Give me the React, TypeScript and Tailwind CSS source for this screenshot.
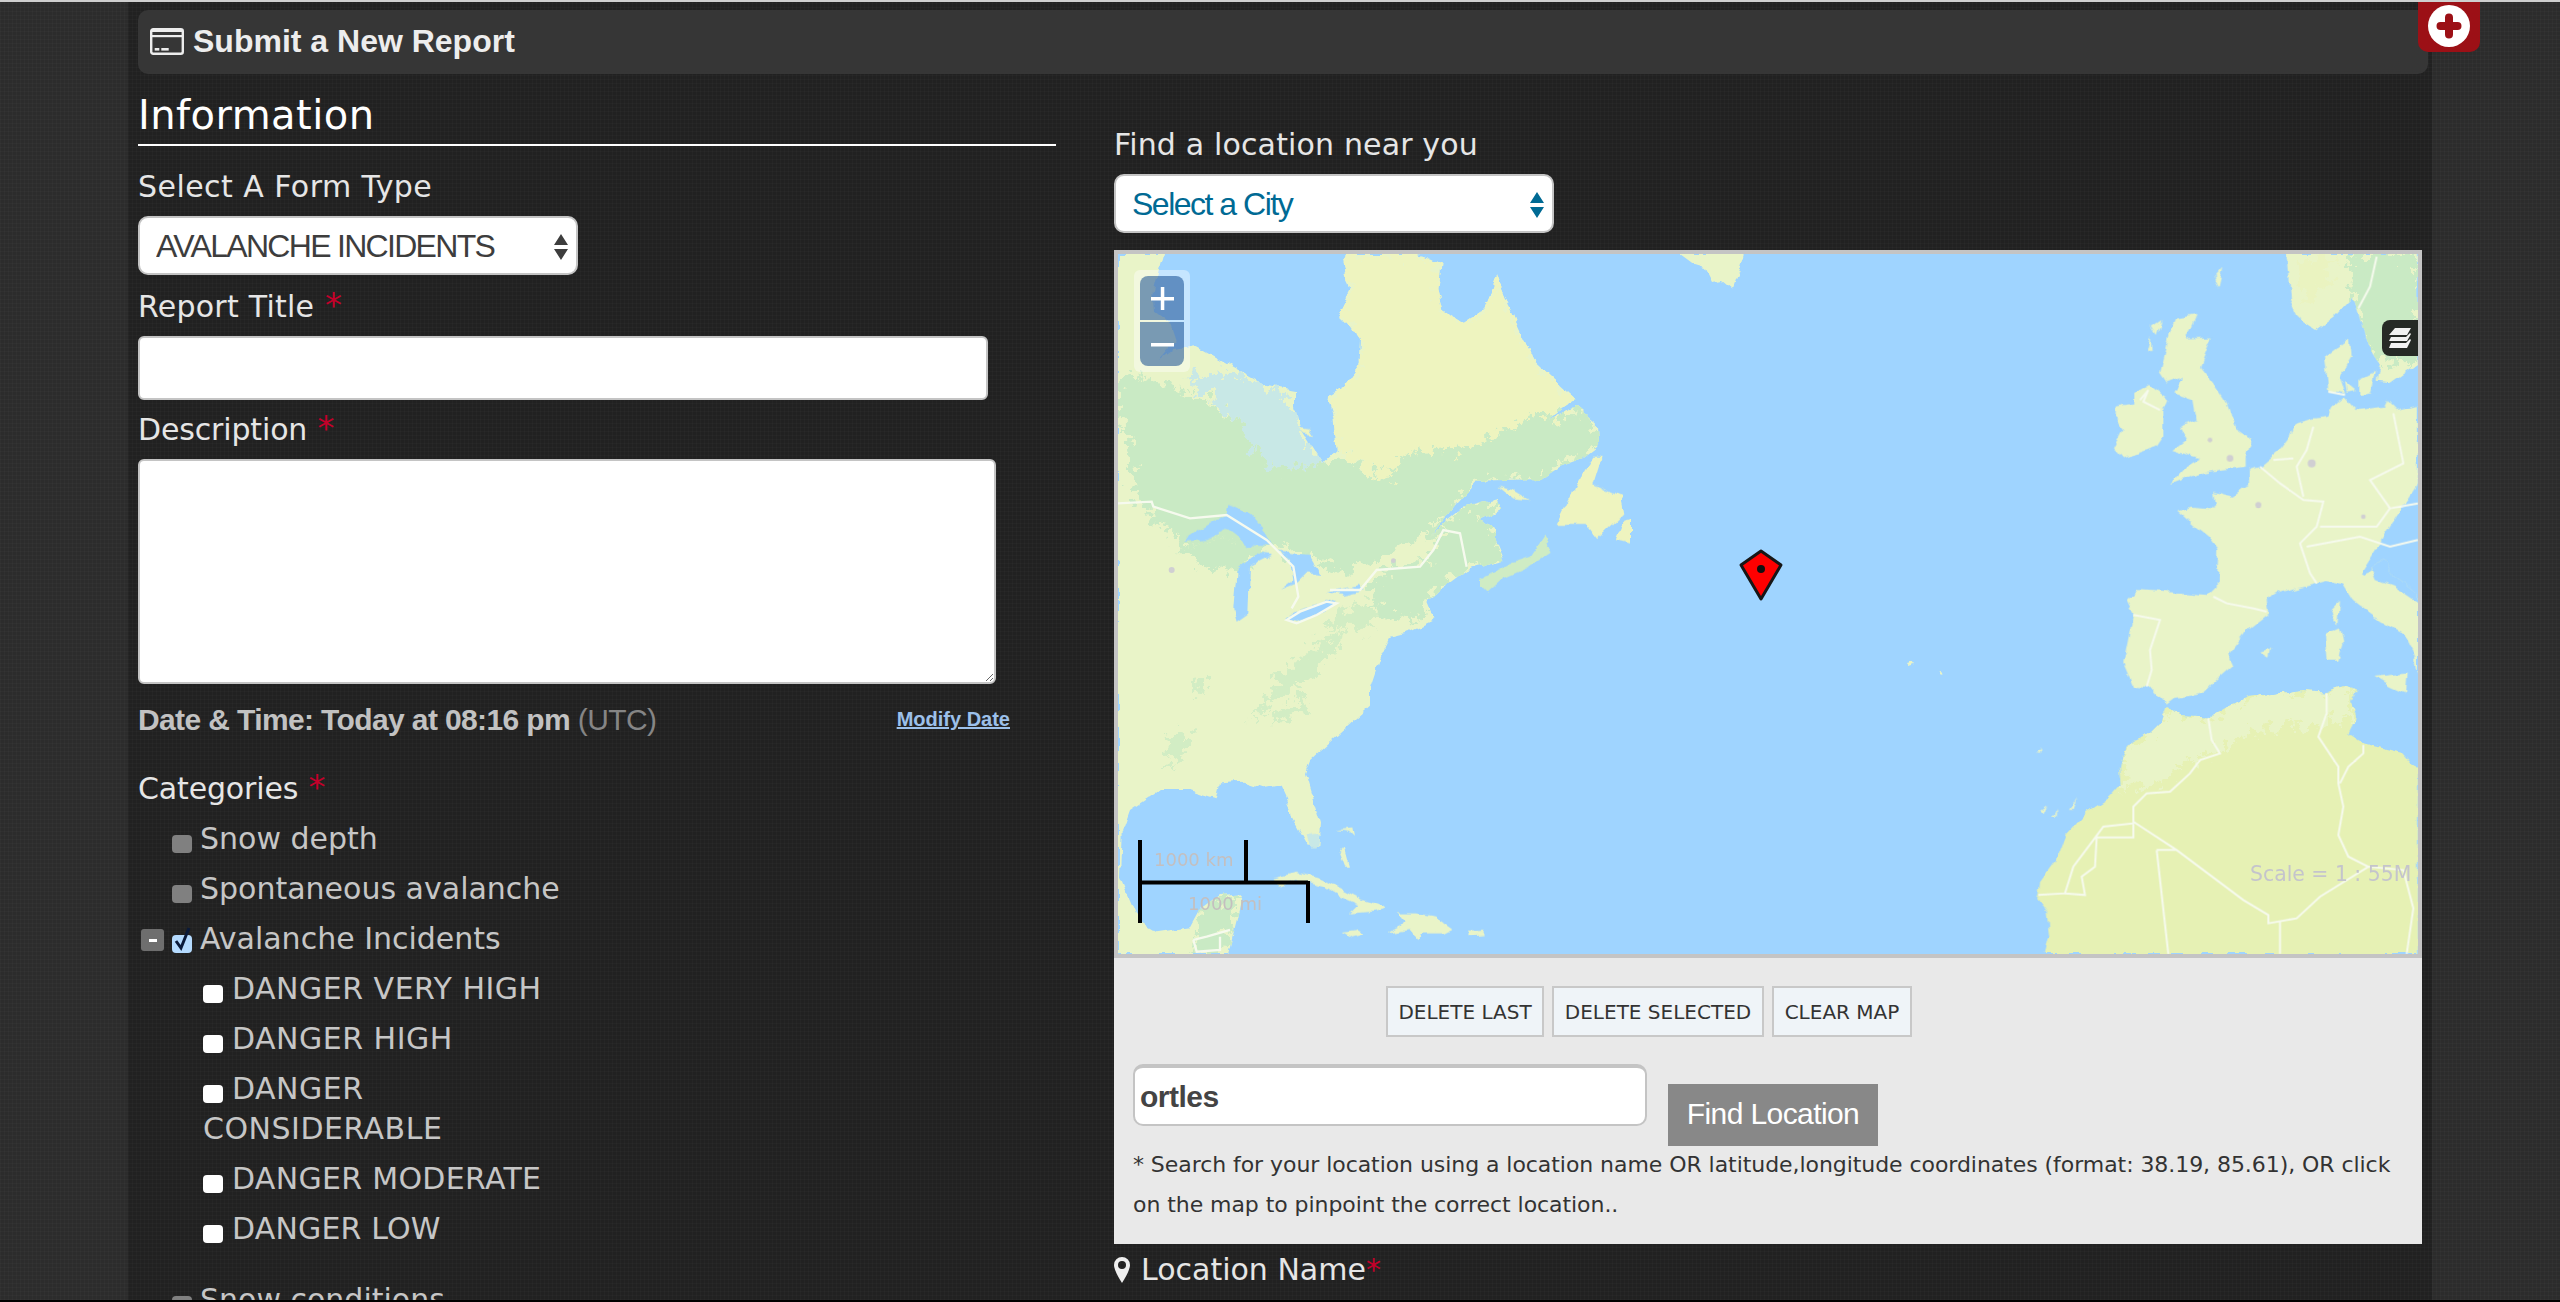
const LABEL = "font-['DejaVu_Sans',sans-serif] text-[30px] leading-[40px] text-[#e6e6e6]";
const TREE = "font-['DejaVu_Sans',sans-serif] text-[30px] leading-[40px] text-[#c6c6c6] pb-[10px]";
const GRID =
  'bg-[repeating-linear-gradient(90deg,rgba(255,255,255,0.018)_0_1px,transparent_1px_4px),repeating-linear-gradient(0deg,rgba(255,255,255,0.018)_0_1px,transparent_1px_4px)]';
const SELECT = "w-full h-full appearance-none rounded-[10px] border-2 border-[#c4c4c4] bg-white pl-[16px] font-['Liberation_Sans',sans-serif] text-[32px]";

const Star = () => <span className="text-[#c4002a] text-[34px] leading-[30px] ml-[1px]">*</span>;

const Arrows = ({ color }: { color: string }) => (
  <svg className="absolute right-[9px] top-[18px]" width="16" height="26" viewBox="0 0 16 26" fill={color}>
    <path d="M8 0l7 11H1zM1 15h14l-7 11z" />
  </svg>
);

const GrayBox = () => <span className="inline-block w-[20px] h-[18px] rounded-[4px] bg-[#808080] mr-[8px] align-[-4px]" />;
const WhiteBox = () => <span className="inline-block w-[20px] h-[18px] rounded-[4px] bg-white mr-[9px] align-[-4px]" />;

// traced from the map, in 3x coordinates
const NA =
  'M24 12L160 12 130 125 135 185 185 225 200 270 150 330 190 300 260 288 370 350 470 405 555 420 555 470 570 530 620 610 640 640 680 600 670 500 650 440 700 410 745 350 750 270 720 225 685 190 720 120 700 40 715 12 920 12 995 40 985 120 1000 180 1060 220 1120 180 1160 75 1215 210 1270 330 1400 450 1310 510 1400 470 1460 520 1465 590 1420 625 1350 650 1290 690 1100 695 1040 760 960 860 1000 820 1060 770 1160 745 1170 780 1110 810 1155 830 1155 870 1180 930 1070 960 950 1050 975 1110 900 1145 840 1160 810 1220 780 1310 780 1370 700 1440 600 1530 585 1570 630 1720 625 1790 595 1790 545 1700 540 1670 510 1605 460 1615 400 1595 330 1600 320 1645 240 1620 150 1620 60 1680 35 1750 30 1880 90 2020 140 2050 240 2035 270 1980 330 1935 400 1930 355 2112 24 2112Z';
const SCAND = 'M980 12L990 150 1020 210 1065 240 1120 200 1175 140 1190 170 1220 280 1260 340 1250 395 1290 400 1374 340 1374 12Z';
const AFRICA =
  'M620 1370L660 1395 750 1400 800 1370 870 1340 1030 1320 1100 1325 1150 1308 1190 1322 1170 1360 1190 1400 1165 1450 1210 1480 1330 1510 1374 1560 1374 2112 255 2112 268 2060 260 1990 232 1950 240 1900 290 1830 320 1750 380 1685 450 1640 485 1600 480 1560 490 1510 520 1470 570 1450 600 1420Z';
const NA_T = 'translate(1110 250) scale(0.33333)';
const EU_T = 'translate(1960 250) scale(0.33333)';

function WorldMap() {
  return (
    <svg className="block w-[1300px] h-[700px]" viewBox="1118 254 1300 700">
      <defs>
        <filter id="rough" filterUnits="userSpaceOnUse" x="1100" y="240" width="1340" height="730">
          <feTurbulence type="fractalNoise" baseFrequency="0.07" numOctaves="3" seed="4" result="n" />
          <feDisplacementMap in="SourceGraphic" in2="n" scale="8" xChannelSelector="R" yChannelSelector="G" />
          <feGaussianBlur stdDeviation="0.6" />
        </filter>
        <filter id="speckle" filterUnits="userSpaceOnUse" x="1100" y="240" width="1340" height="730">
          <feTurbulence type="fractalNoise" baseFrequency="0.11" numOctaves="4" seed="9" result="n" />
          <feDisplacementMap in="SourceGraphic" in2="n" scale="34" xChannelSelector="G" yChannelSelector="R" />
          <feGaussianBlur stdDeviation="0.7" />
        </filter>
        <filter id="soft" filterUnits="userSpaceOnUse" x="1100" y="240" width="1340" height="730">
          <feGaussianBlur stdDeviation="0.5" />
        </filter>
        <clipPath id="land">
          <path transform={NA_T} d={NA} />
          <path transform={EU_T} d={SCAND} />
          <path transform={EU_T} d={AFRICA} />
        </clipPath>
      </defs>
      <rect x="1118" y="254" width="1300" height="700" fill="#9fd4ff" />
      <g filter="url(#rough)">
        <path transform={NA_T} fill="#e9f4c8" d={NA} />
        <path transform={EU_T} fill="#e9f4c8" d={SCAND} />
        <path transform={EU_T} fill="#e6f1b4" d={AFRICA} />
        <g clipPath="url(#land)">
          <g filter="url(#speckle)">
            <g transform={NA_T}>
              <path fill="#eef4bf" d="M700 12L985 12 985 120 1000 180 1060 220 1120 180 1160 75 1215 210 1270 330 1400 450 1310 510 1280 490 1100 590 900 610 820 690 700 610 680 600 670 500 650 440 700 410 745 350 750 270 720 225 685 190 720 120Z" />
              <path fill="#c8e8e6" d="M230 380L370 370 470 410 555 470 570 530 620 610 640 640 500 660 420 590 390 520 300 440Z" />
              <path fill="#c9eac4" d="M24 370L100 385 200 410 310 460 390 520 420 590 500 660 640 640 700 620 820 690 900 610 1100 590 1280 490 1310 510 1400 470 1460 520 1465 590 1420 625 1350 650 1290 690 1100 695 1040 760 960 860 880 880 820 920 700 975 620 920 480 890 410 885 350 850 290 870 220 875 120 800 80 740 60 600 30 500Z" />
              <path fill="#c9eac4" d="M220 875L290 870 350 850 410 885 490 890 370 960 280 950 200 890Z" />
              <path fill="#c9eac4" d="M1000 830L1060 770 1160 745 1170 780 1110 810 1155 830 1155 870 1180 930 1070 960 950 1050 930 1110 800 1100 780 1000 820 960 950 940Z" />
              <path fill="#d2edc4" d="M520 1270L600 1200 700 1130 690 1180 600 1280 510 1340 420 1420 430 1390 470 1350ZM480 1420L560 1350 610 1350 520 1420ZM170 1490L190 1440 240 1460 220 1520 190 1550ZM240 1300L265 1265 290 1310 260 1340ZM640 1130L740 1060 800 1080 790 1140 700 1130Z" />
              <path fill="#c9eac4" d="M250 2060L270 1990 330 1935 385 1935 360 2050 355 2112 250 2112Z" />
            </g>
            <g transform={EU_T}>
              <path fill="#c9eac4" d="M1180 140L1170 12 1374 12 1374 340 1260 330 1220 270Z" />
              <path fill="#eaf3c0" d="M1000 30L1130 30 1100 110 1030 150Z" />
              <path fill="#e9f4c8" d="M620 1370L660 1395 750 1400 870 1340 1030 1320 1150 1308 1190 1322 1170 1360 1190 1400 1080 1420 880 1450 700 1530 560 1620 490 1600 480 1560 490 1510 520 1470 570 1450 600 1420Z" />
            </g>
          </g>
        </g>
        <g transform={NA_T}>
          <path fill="#cfecc4" d="M1110 990L1200 940 1260 920 1300 860 1325 905 1260 950 1180 985 1130 1030 1110 1010Z" />
          <path fill="#eef4bf" d="M1340 825L1400 700 1450 620 1475 620 1450 700 1530 740 1540 790 1520 810 1460 865 1430 825Z" />
          <path fill="#eef4bf" d="M1520 870L1540 820 1560 810 1560 880ZM1165 710L1210 720 1260 750 1210 745ZM565 530L600 535 612 555 585 550Z" />
          {/* lakes */}
          <path fill="#9fd4ff" d="M222 875L270 840 350 790 355 765 420 790 470 850 490 890 410 885 350 840 290 870ZM370 1080L380 960 440 910 490 915 420 950 415 1090 380 1115ZM500 905L600 915 635 975 590 970 560 1000 510 1020 550 990 540 930ZM525 1110L570 1080 650 1050 680 1060 620 1095 560 1120ZM650 1025L700 1015 750 1005 765 1020 700 1035Z" />
          <path fill="#c8e8e6" d="M590 1755L630 1750 620 1795 600 1795Z" />
          {/* caribbean */}
          <path fill="#e9f4c8" d="M490 1885L560 1868 630 1885 700 1920 760 1950 830 1975 790 1985 720 1990 745 1965 690 1940 640 1910 560 1890 510 1910ZM860 1990L920 1990 980 2000 1030 2035 1000 2050 940 2050 925 2070 900 2040 830 2050 870 2030 880 2015ZM695 2045L740 2040 765 2055 730 2065ZM1072 2045L1120 2042 1125 2055 1080 2058ZM690 1810L705 1795 720 1850 705 1850ZM680 1740L730 1735 735 1760 720 1745Z" />
        </g>
        {/* greenland */}
        <path fill="#e9f4c8" d="M1680 254L1745 254 1740 270 1733 289 1722 280 1712 282 1705 268 1695 265Z" />
        {/* europe */}
        <g transform={EU_T}>
          <path fill="#e9f4c8" d="M470 470L520 460 520 435 570 405 625 445 610 480 610 560 590 590 490 625 462 595 490 540 470 510Z" />
          <path fill="#e9f4c8" d="M600 370L630 250 650 205 710 195 680 265 755 262 720 350 760 400 800 460 830 540 875 570 860 620 860 650 780 660 720 670 630 705 680 650 720 625 640 600 680 570 660 530 710 510 700 450 640 430 670 380 620 400Z" />
          <path fill="#e9f4c8" d="M575 230L605 210 590 255ZM560 300L572 255 575 300ZM760 85L790 50 775 115Z" />
          <path fill="#e9f4c8" d="M1095 320L1170 265 1175 320 1140 380 1155 430 1105 420ZM1155 395L1185 420 1160 425ZM1195 390L1245 365 1230 430 1195 435Z" />
          <path fill="#e9f4c8" d="M1374 465L1310 480 1280 450 1270 470 1190 480 1155 440 1120 470 1105 500 1060 505 1000 525 990 560 960 600 900 650 870 660 870 700 815 740 760 725 765 775 690 770 655 785 700 825 745 860 775 900 770 1010 745 1035 530 1020 500 1050 520 1090 490 1240 520 1310 580 1315 620 1360 640 1345 730 1330 780 1280 820 1245 805 1210 860 1140 925 1090 920 1050 950 1030 1100 990 1150 1000 1180 1050 1260 1110 1330 1150 1365 1220 1374 1270 1374 1030 1300 975 1270 925 1235 950 1240 990 1200 970 1374 700Z" />
          <path fill="#e9f4c8" d="M1150 1000L1240 960 1374 1040 1374 1270 1365 1220 1330 1150 1260 1110 1180 1050Z" />
          <path fill="#9fd4ff" d="M1235 950L1270 925 1300 975 1374 1030 1374 1060 1300 1010 1250 990Z" />
          <path fill="#e9f4c8" d="M1240 1280L1340 1270 1335 1330 1290 1310ZM1095 1155L1140 1135 1150 1180 1135 1235 1100 1235ZM1115 1080L1140 1055 1135 1125ZM900 1205L930 1195 925 1220ZM235 1495L245 1490 238 1510ZM240 1680L262 1665 250 1690ZM330 1680L355 1640 340 1680ZM280 1700L292 1680 290 1700Z" />
        </g>
        {/* azores */}
        <path fill="#e9f4c8" d="M1905 664l7-2 1 3-6 2zM1940 672l4 1-1 2-4-1z" />
      </g>
      <g filter="url(#soft)">
        <g transform={NA_T}>
          <path fill="none" stroke="#f6faee" strokeWidth="7" d="M24 760L125 755 130 770 240 805 350 795 470 870 500 900 550 950 565 1040 545 1075M660 1020L750 1020 800 960 930 950 970 900 1000 840 1050 850 1070 950M530 1110L570 1085 650 1055 680 1060 620 1095 560 1120ZM250 2070L290 2060 360 2040M250 2070L260 2105 330 2100 330 2060" />
          <circle cx="185" cy="960" r="9" fill="#d0cfd2" />
          <circle cx="850" cy="932" r="7" fill="#d0cfd2" />
        </g>
        <g transform={EU_T}>
          <path fill="none" stroke="#f6faee" strokeWidth="6" d="M745 1405L755 1470 780 1510 720 1530 690 1570 630 1625 560 1630 520 1670 520 1720 430 1730 400 1770 340 1850 315 1930 235 1935M520 1720L520 1762 410 1762 405 1850 365 1880 375 1935 315 1930M520 1715L650 1800 850 1950 925 1995 925 2020 1010 2005 1080 1940 1225 1850 1165 1820 1135 1755 1150 1670 1135 1600 1135 1550 1075 1460 1100 1390 1100 1330M1140 1600L1165 1550 1210 1510 1210 1485M590 1800L650 1800M590 1800L625 2112M960 2015L960 2112M1225 1850L1330 1860 1360 1975 1340 2112M520 1095L600 1110 570 1200 575 1260 560 1310M760 1040L800 1060 880 1075 920 1085M540 450L565 420 550 455 600 480M900 650L960 700 1030 750 1090 755 1070 830 1020 880 1050 970 1070 1000M1060 530L1040 600 1010 650 1030 740M1000 625L940 630M1300 490L1330 640 1230 690 1290 775 1374 760M1080 830L1250 830 1290 775M1040 890L1200 860 1290 890 1374 870M1250 20L1230 110 1195 175M1105 425L1155 435" />
          <circle cx="895" cy="765" r="9" fill="#d0cfd2" />
          <circle cx="810" cy="625" r="10" fill="#d0cfd2" />
          <circle cx="1055" cy="640" r="12" fill="#d0cfd2" />
          <circle cx="750" cy="570" r="7" fill="#d0cfd2" />
          <circle cx="1210" cy="800" r="7" fill="#d0cfd2" />
        </g>
      </g>

      {/* scale bar */}
      <path fill="none" stroke="#000" strokeWidth="4" d="M1140 840V923M1140 882.500H1308M1246 840V882M1308 881V923" />
      <text x="1154" y="866" fill="#c4bfbf" fontFamily="DejaVu Sans, sans-serif" fontSize="18">1000 km</text>
      <text x="1188" y="910" fill="#c4bfbf" fontFamily="DejaVu Sans, sans-serif" fontSize="18">1000 mi</text>
      <text x="2250" y="881" fill="#c4c4cc" fontFamily="DejaVu Sans, sans-serif" fontSize="20.400">Scale = 1 : 55M</text>

      {/* marker */}
      <path d="M1761 551L1781 565 1761 599 1741 565Z" fill="#ff0000" stroke="#161616" strokeWidth="3" strokeLinejoin="round" />
      <circle cx="1761" cy="569" r="4" fill="#111" />
    </svg>
  );
}

const ZoomGlyph = ({ plus }: { plus?: boolean }) => (
  <svg width="23" height="23" viewBox="0 0 23 23" fill="#fff">
    <rect x="0" y="10" width="23" height="3.500" />
    {plus && <rect x="9.800" y="0" width="3.500" height="23" />}
  </svg>
);

export default function App() {
  return (
    <div className={`relative h-[1302px] overflow-hidden bg-[#2c2c2c] ${GRID} border-t-2 border-t-[#cfcfcf] border-b-2 border-b-black`}>
      <div className={`ml-[128px] w-[2304px] h-full bg-[#212121] ${GRID} pl-[10px] pr-[4px] pt-[8px]`}>
        <div className="flex items-center h-[64px] rounded-[10px] bg-[#363636] pl-[12px] pb-[2px] font-['Liberation_Sans',sans-serif] font-bold text-[32px] text-[#ededed]">
          <svg width="34" height="27" viewBox="0 0 34 27" className="mr-[9px]">
            <rect x="1.200" y="1.200" width="31.600" height="24.600" rx="2" fill="none" stroke="#ededed" strokeWidth="2.400" />
            <rect x="1" y="1" width="32" height="3" fill="#ededed" />
            <rect x="1" y="7" width="32" height="2.200" fill="#ededed" />
            <rect x="4.700" y="20" width="4.600" height="2.600" fill="#ededed" />
            <rect x="11.300" y="20" width="7.400" height="2.600" fill="#ededed" />
          </svg>
          Submit a New Report
        </div>

        <div className="flex">
          <div className="w-[918px] shrink-0">
            <div className="h-[72px] pt-[16px] border-b-2 border-white font-['DejaVu_Sans',sans-serif] text-[40px] tracking-[0.45px] leading-[50px] text-white">Information</div>
            <div className={`${LABEL} mt-[21px] tracking-[0.45px]`}>Select A Form Type</div>
            <div className="relative mt-[9px] w-[440px] h-[59px]">
              <select className={`${SELECT} tracking-[-1.7px] text-[#3d3d3d]`}>
                <option>AVALANCHE INCIDENTS</option>
              </select>
              <Arrows color="#3d3d3d" />
            </div>
            <div className={`${LABEL} mt-[12px] tracking-[0.25px]`}>Report Title <Star /></div>
            <input className="block mt-[9px] w-[850px] h-[64px] rounded-[6px] border-2 border-[#c4c4c4] bg-white" />
            <div className={`${LABEL} mt-[10px] tracking-[-0.15px]`}>Description <Star /></div>
            <textarea className="block mt-[9px] w-[858px] h-[225px] rounded-[6px] border-2 border-[#c4c4c4] bg-white" />
            <div className="flex items-center justify-between mt-[15px] mb-[2px] h-[40px] w-[872px] font-['Liberation_Sans',sans-serif]">
              <div className="text-[30px] font-bold tracking-[-0.62px] text-[#c2c2c2]">Date &amp; Time: Today at 08:16 pm <span className="font-normal text-[#858585]">(UTC)</span></div>
              <a className="text-[20px] font-bold text-[#9cc0ea] underline">Modify Date</a>
            </div>
            <div className={`${LABEL} mt-[30px] tracking-[-0.15px]`}>Categories <Star /></div>
            <div className="mt-[10px] pl-[34px]">
              <div className={TREE}><GrayBox />Snow depth</div>
              <div className={TREE}><GrayBox />Spontaneous avalanche</div>
              <div className={`${TREE} relative`}>
                <span className="absolute left-[-31px] top-[10px] flex items-center justify-center w-[23px] h-[22px] rounded-[3px] bg-[#6e6e6e]">
                  <span className="w-[8px] h-[3px] bg-white" />
                </span>
                <span className="relative inline-block w-[20px] h-[18px] rounded-[4px] bg-[#b5dbff] mr-[8px] align-[-4px]">
                  <svg className="absolute left-[1px] top-[-9px]" width="20" height="26" viewBox="0 0 20 26" fill="none" stroke="#0a1a3a" strokeWidth="3">
                    <path d="M3 15l5 7L16 2" />
                  </svg>
                </span>
                Avalanche Incidents
              </div>
              <div className="pl-[31px] w-[300px]">
                <div className={`${TREE} whitespace-nowrap tracking-[0.5px]`}><WhiteBox />DANGER VERY HIGH</div>
                <div className={`${TREE} whitespace-nowrap tracking-[0.5px]`}><WhiteBox />DANGER HIGH</div>
                <div className={`${TREE} tracking-[0.5px]`}><WhiteBox />DANGER CONSIDERABLE</div>
                <div className={`${TREE} whitespace-nowrap tracking-[0.3px]`}><WhiteBox />DANGER MODERATE</div>
                <div className={`${TREE} whitespace-nowrap tracking-[0.15px]`}><WhiteBox />DANGER LOW</div>
              </div>
              <div className={`${TREE} mt-[21px]`}><GrayBox />Snow conditions</div>
            </div>
          </div>

          <div className="ml-[58px] w-[1308px] shrink-0">
            <div className={`${LABEL} mt-[51px] tracking-[0.15px]`}>Find a location near you</div>
            <div className="relative mt-[9px] w-[440px] h-[59px]">
              <select className={`${SELECT} tracking-[-1.5px] text-[#006a94]`}>
                <option>Select a City</option>
              </select>
              <Arrows color="#006a94" />
            </div>
            <div className="relative mt-[17px] border-4 border-[#c4c4c4] overflow-hidden">
              <WorldMap />
              <div className="absolute left-[16px] top-[16px] w-[56px] h-[102px] rounded-[6px] bg-white/40 p-[6px]">
                <div className="flex flex-col gap-[2px] w-[44px] h-[90px] rounded-[8px] overflow-hidden">
                  <div className="flex-1 flex items-center justify-center bg-[#003c88]/50"><ZoomGlyph plus /></div>
                  <div className="flex-1 flex items-center justify-center bg-[#003c88]/50"><ZoomGlyph /></div>
                </div>
              </div>
              <div className="absolute right-0 top-[66px] flex items-center justify-center w-[36px] h-[36px] rounded-l-[8px] bg-[#262a26]">
                <svg width="24" height="21" viewBox="0 0 24 21" fill="#f2f2f2">
                  <path d="M7 0H23L19 7H1ZM3 9H18L22 5 23 6 19 13H1ZM3 15H18L22 11 23 12 19 20H1Z" />
                </svg>
              </div>
            </div>
            <div className="h-[286px] bg-[#e9e9e9] overflow-hidden">
              <div className="flex gap-[8px] mt-[28px] ml-[272px] h-[51px] font-['DejaVu_Sans',sans-serif] text-[20px] text-[#333]">
                <button className="w-[158px] bg-[#eff4f8] border-2 border-[#c8c8c8]">DELETE LAST</button>
                <button className="w-[212px] bg-[#eff4f8] border-2 border-[#c8c8c8]">DELETE SELECTED</button>
                <button className="w-[140px] bg-[#eff4f8] border-2 border-[#c8c8c8]">CLEAR MAP</button>
              </div>
              <div className="flex items-start mt-[27px] ml-[19px]">
                <input readOnly value="ortles" className="w-[514px] h-[62px] rounded-[10px] border-2 border-t-4 border-[#c4c4c4] bg-white pl-[5px] pt-[2px] font-['Liberation_Sans',sans-serif] font-bold text-[30px] tracking-[-0.5px] text-[#444]" />
                <button className="ml-[21px] mt-[20px] w-[210px] h-[62px] pb-[4px] bg-[#888] font-['Liberation_Sans',sans-serif] text-[30px] tracking-[-0.6px] text-white">Find Location</button>
              </div>
              <p className="mt-[-1px] mx-[19px] font-['DejaVu_Sans',sans-serif] text-[22px] tracking-[-0.06px] leading-[40px] text-[#333]">* Search for your location using a location name OR latitude,longitude coordinates (format: 38.19, 85.61), OR click on the map to pinpoint the correct location..</p>
            </div>
            <div className={`${LABEL} mt-[6px] flex items-center`}>
              <svg width="16" height="26" viewBox="0 0 16 26" className="mr-[11px]">
                <path fill="#eee" fillRule="evenodd" d="M8 0a8 8 0 0 1 8 8c0 4-4 12-8 18C4 20 0 12 0 8a8 8 0 0 1 8-8zm0 4a4 4 0 1 0 0 8 4 4 0 0 0 0-8z" />
              </svg>
              Location Name<span className="text-[#c4002a]">*</span>
            </div>
          </div>
        </div>
      </div>

      <div className="absolute left-[2418px] top-0 flex justify-center pt-[3px] w-[62px] h-[50px] rounded-b-[10px] bg-[#9c1016]">
        <svg width="42" height="42" viewBox="0 0 42 42">
          <circle cx="21" cy="21" r="21" fill="#fff" />
          <path d="M12.500 21H29.500M21 12.500V29.500" stroke="#9c1016" strokeWidth="8" strokeLinecap="round" />
        </svg>
      </div>
    </div>
  );
}
